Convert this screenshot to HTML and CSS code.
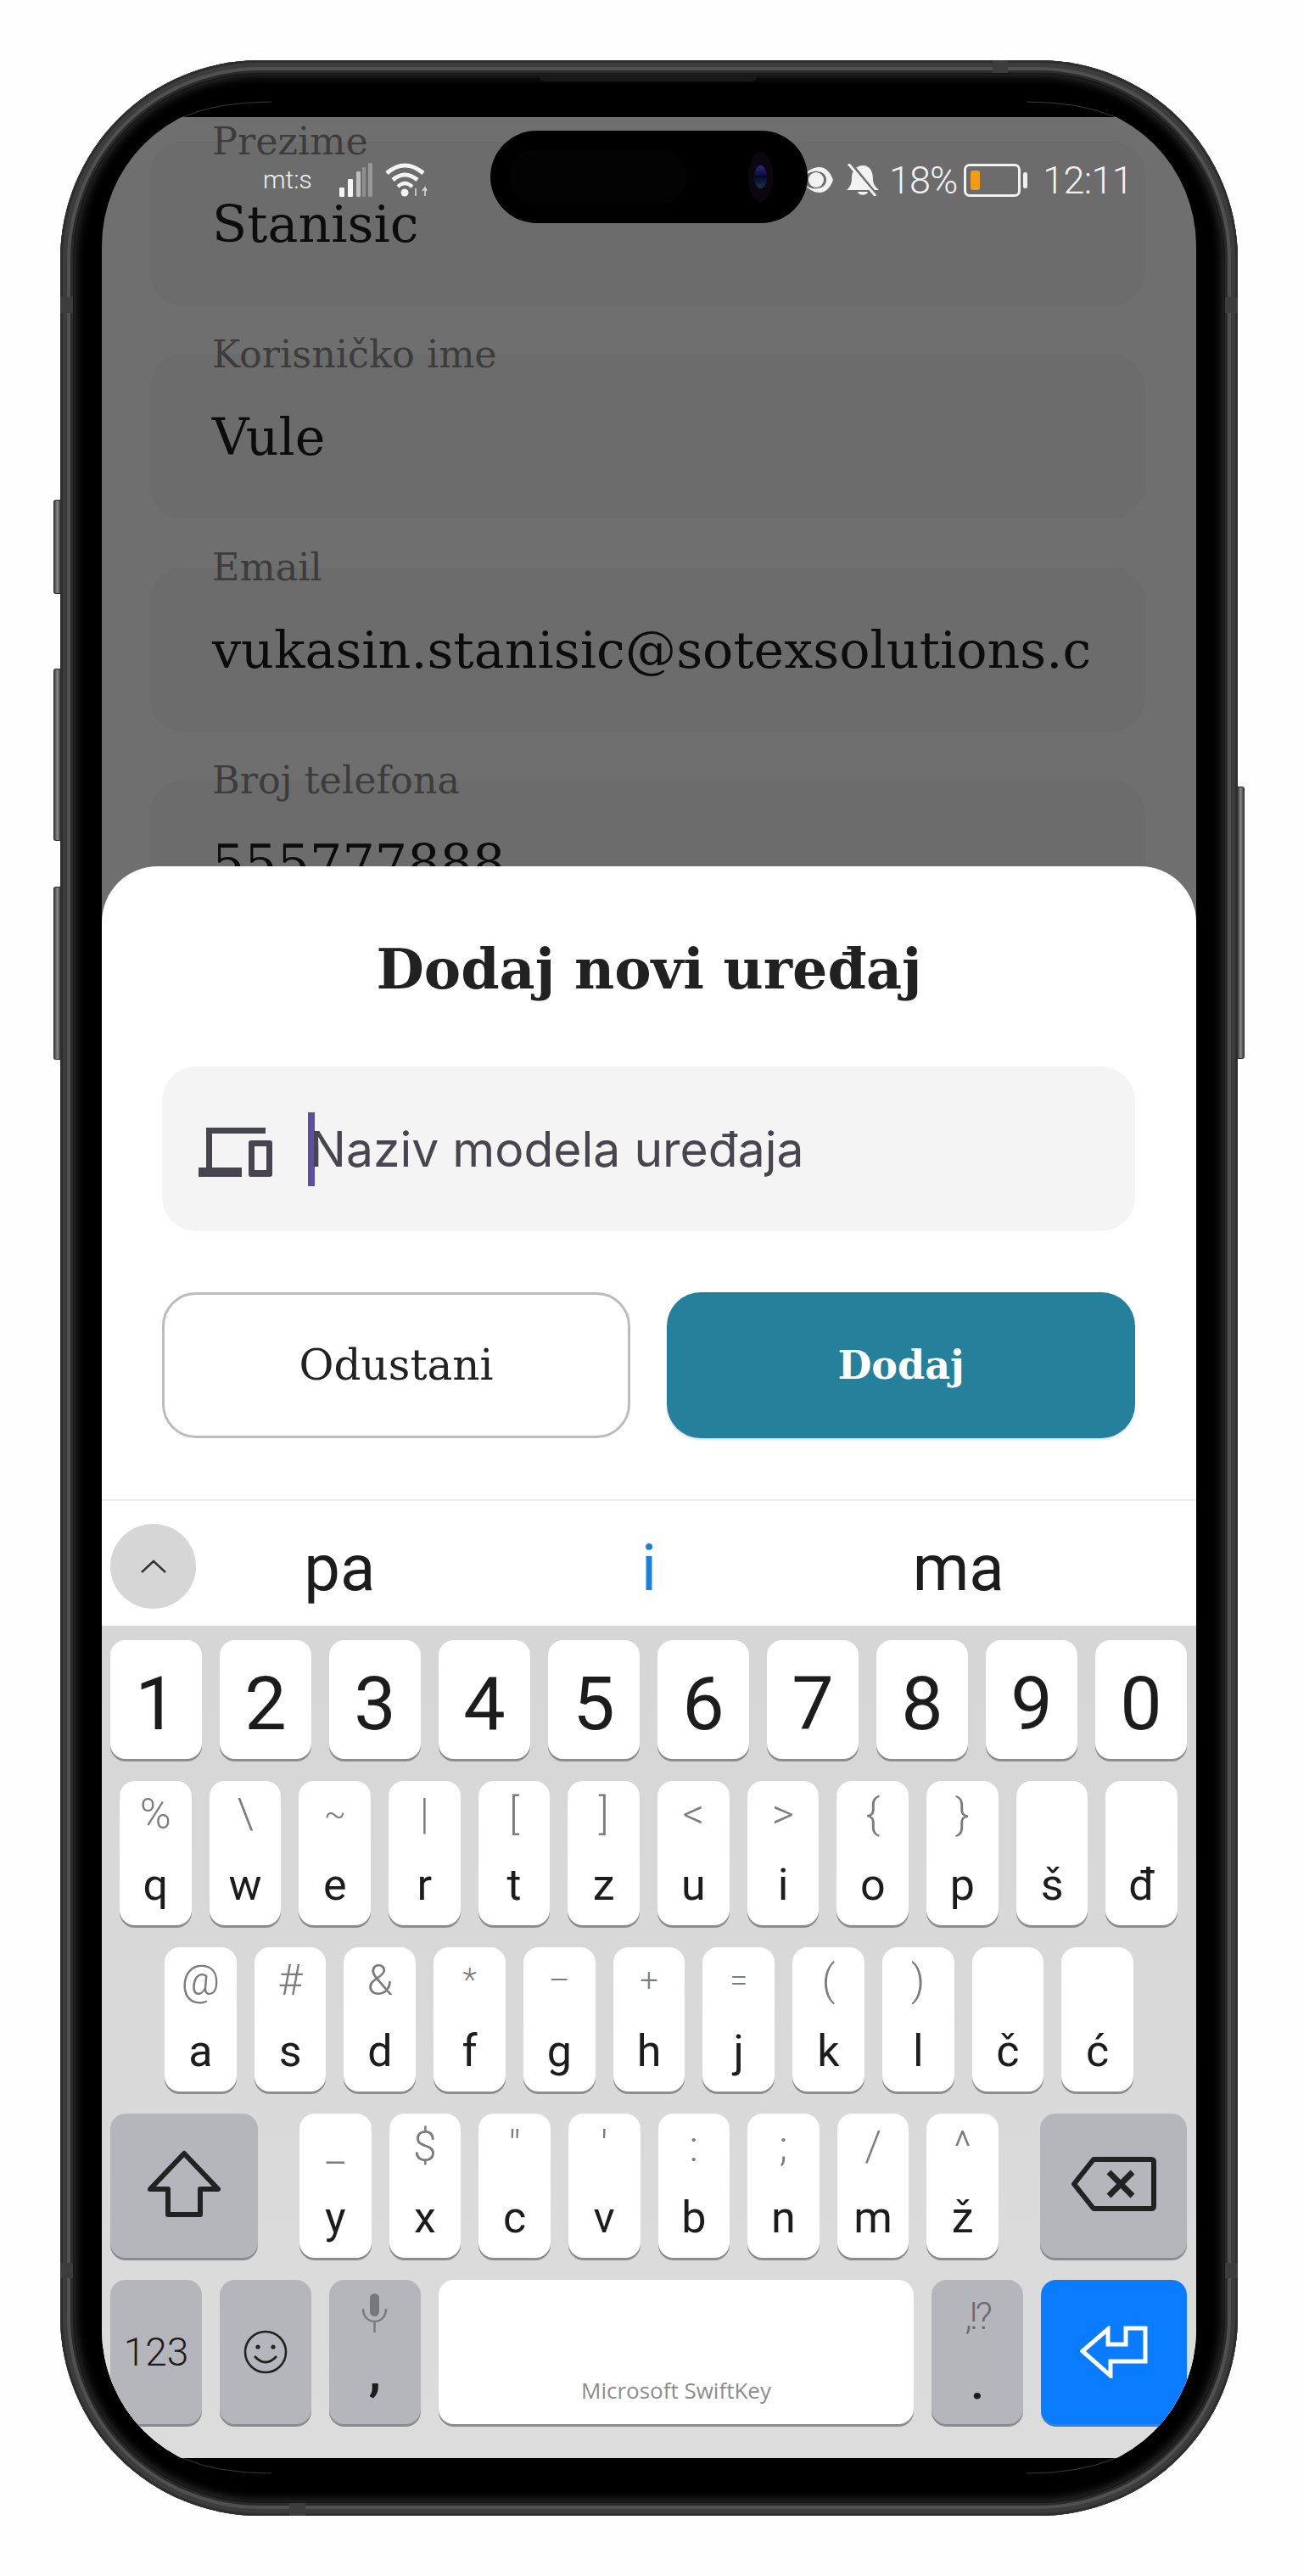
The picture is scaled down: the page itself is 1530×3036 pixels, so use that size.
FILE: index.html
```html
<!DOCTYPE html>
<html lang="sr">
<head>
  <meta charset="UTF-8" />
  <meta name="viewport" content="width=device-width, initial-scale=1.0" />
  <title>Dodaj novi uređaj</title>
  <link rel="stylesheet" href="styles.css">
</head>
<body>

  <div class="phone">
    <span class="side-btn btn-mute"></span>
    <span class="side-btn btn-up"></span>
    <span class="side-btn btn-down"></span>
    <span class="side-btn btn-power"></span>
    <span class="band band-top"></span>
    <span class="band band-bottom"></span>
    <span class="band band-left"></span>
    <span class="band band-right"></span>
    <span class="band band-left-low"></span>
    <span class="band band-right-low"></span>

    <div class="bezel">
      <span class="speaker"></span>

      <svg class="hairlines" width="1356" height="2862" viewBox="0 0 1356 2862">
        <path d="M128 51 Q170 33 233 33 M1228 51 Q1186 33 1123 33 M128 2810 Q170 2828 233 2828 M1228 2810 Q1186 2828 1123 2828" fill="none" stroke="#3a3a3a" stroke-width="1"/>
      </svg>

      <div class="screen-mask">
        <div class="screen">

          <div class="form">
            <div class="field">
              <span class="field-label">Prezime</span>
              <span class="field-value">Stanisic</span>
            </div>
            <div class="field">
              <span class="field-label">Korisničko ime</span>
              <span class="field-value">Vule</span>
            </div>
            <div class="field">
              <span class="field-label">Email</span>
              <span class="field-value">vukasin.stanisic@sotexsolutions.c</span>
            </div>
            <div class="field">
              <span class="field-label">Broj telefona</span>
              <span class="field-value">555777888</span>
            </div>
          </div>

          <div class="status-bar">
            <div class="status-left">
              <span class="carrier">mt:s</span>
              <svg class="icon-signal" width="40" height="40" viewBox="0 0 40 40">
                <rect x="0" y="29" width="6" height="11" rx="1" fill="#f4f4f4"/>
                <rect x="10" y="19" width="6" height="21" rx="1" fill="#f4f4f4"/>
                <rect x="20" y="10" width="5" height="30" rx="1" fill="#bdbdbd"/>
                <rect x="27" y="5" width="4" height="35" rx="1" fill="#8f8f8f"/>
                <rect x="34" y="0" width="5" height="40" rx="1" fill="#989898"/>
              </svg>
              <svg class="icon-wifi" width="50" height="40" viewBox="0 0 50 40">
                <path d="M2 12 Q23 -6 45 12" fill="none" stroke="#f4f4f4" stroke-width="5"/>
                <path d="M9 20 Q23 8 38 20" fill="none" stroke="#f4f4f4" stroke-width="5"/>
                <path d="M15 28 Q23 20 32 28" fill="none" stroke="#f4f4f4" stroke-width="4.5"/>
                <circle cx="23" cy="35" r="4.5" fill="#f4f4f4"/>
                <path d="M36 39 V30 M47 39 V30 M44 33 L47 29 L49 33" fill="none" stroke="#d8d8d8" stroke-width="1.6"/>
              </svg>
            </div>
            <div class="status-right">
              <svg class="icon-eye" width="36" height="30" viewBox="0 0 36 30">
                <path d="M0 11 C6 2 14 0 19 0 C26 0 32 6 35 15 C32 24 26 30 19 30 C14 30 6 27 0 19 C7 25 12 26 17 25 C24 24 27 20 27 15 C27 10 24 6 17 5 C12 4 7 6 0 11Z" fill="#f2f2f2"/>
                <circle cx="15" cy="15" r="9" fill="#f2f2f2"/>
              </svg>
              <svg class="icon-bell" width="38" height="38" viewBox="0 0 38 38">
                <path d="M19 2 C28 2 31 10 31 18 C31 24 34 27 38 31 H0 C4 27 6 24 6 16 C6 9 11 2 19 2Z" fill="#f2f2f2"/>
                <path d="M13 33 H25 C24 38 14 38 13 33Z" fill="#f2f2f2"/>
                <path d="M5 0 L36 38" stroke="#6f6f6f" stroke-width="4"/>
                <path d="M2 0 L34 38" stroke="#f2f2f2" stroke-width="3"/>
              </svg>
              <span class="battery-pct">18%</span>
              <div class="battery"><span class="battery-fill"></span></div>
              <span class="battery-nub"></span>
              <span class="clock">12:11</span>
            </div>
          </div>

          <div class="sheet">
            <h2 class="sheet-title">Dodaj novi uređaj</h2>

            <div class="input-box">
              <svg class="icon-device" width="87" height="58" viewBox="0 0 87 58">
                <path d="M9 0 H79 V7 H16 V47 H51 V58 H0 V47 H9Z" fill="#49454f"/>
                <path fill-rule="evenodd" d="M62 15 H84 Q87 15 87 18 V55 Q87 58 84 58 H62 Q59 58 59 55 V18 Q59 15 62 15Z M66 22 V50 H80 V22Z" fill="#49454f"/>
              </svg>
              <span class="caret"></span>
              <span class="placeholder">Naziv modela uređaja</span>
            </div>

            <div class="sheet-actions">
              <button class="btn btn-cancel">Odustani</button>
              <button class="btn btn-add">Dodaj</button>
            </div>

            <div class="suggest-bar">
              <div class="suggest-toggle">
                <svg width="32" height="18" viewBox="0 0 32 18">
                  <path d="M2 16 L16 3 L30 16" fill="none" stroke="#333" stroke-width="2.4"/>
                </svg>
              </div>
              <div class="suggest-words">
                <span>pa</span>
                <span class="suggest-main">i</span>
                <span>ma</span>
              </div>
            </div>

            <div class="keyboard">
              <div class="kb-row row-digits">
                <div class="key digit">1</div>
                <div class="key digit">2</div>
                <div class="key digit">3</div>
                <div class="key digit">4</div>
                <div class="key digit">5</div>
                <div class="key digit">6</div>
                <div class="key digit">7</div>
                <div class="key digit">8</div>
                <div class="key digit">9</div>
                <div class="key digit">0</div>
              </div>

              <div class="kb-row row-top">
                <div class="key"><span class="hint">%</span><span class="letter">q</span></div>
                <div class="key"><span class="hint">\</span><span class="letter">w</span></div>
                <div class="key"><span class="hint hint-small">~</span><span class="letter">e</span></div>
                <div class="key"><span class="hint">|</span><span class="letter">r</span></div>
                <div class="key"><span class="hint">[</span><span class="letter">t</span></div>
                <div class="key"><span class="hint">]</span><span class="letter">z</span></div>
                <div class="key"><span class="hint">&lt;</span><span class="letter">u</span></div>
                <div class="key"><span class="hint">&gt;</span><span class="letter">i</span></div>
                <div class="key"><span class="hint">{</span><span class="letter">o</span></div>
                <div class="key"><span class="hint">}</span><span class="letter">p</span></div>
                <div class="key"><span class="hint"></span><span class="letter">š</span></div>
                <div class="key"><span class="hint"></span><span class="letter">đ</span></div>
              </div>

              <div class="kb-row row-home">
                <div class="key"><span class="hint">@</span><span class="letter">a</span></div>
                <div class="key"><span class="hint">#</span><span class="letter">s</span></div>
                <div class="key"><span class="hint">&amp;</span><span class="letter">d</span></div>
                <div class="key"><span class="hint hint-small">*</span><span class="letter">f</span></div>
                <div class="key"><span class="hint hint-small">–</span><span class="letter">g</span></div>
                <div class="key"><span class="hint hint-small">+</span><span class="letter">h</span></div>
                <div class="key"><span class="hint hint-small">=</span><span class="letter">j</span></div>
                <div class="key"><span class="hint">(</span><span class="letter">k</span></div>
                <div class="key"><span class="hint">)</span><span class="letter">l</span></div>
                <div class="key"><span class="hint"></span><span class="letter">č</span></div>
                <div class="key"><span class="hint"></span><span class="letter">ć</span></div>
              </div>

              <div class="kb-row row-shift">
                <div class="key key-mod key-shift">
                  <svg width="88" height="80" viewBox="0 0 88 80">
                    <path d="M44 4 L84 46 H63 V76 H25 V46 H4Z" fill="none" stroke="#222" stroke-width="6" stroke-linejoin="round"/>
                  </svg>
                </div>
                <div class="key"><span class="hint">_</span><span class="letter">y</span></div>
                <div class="key"><span class="hint">$</span><span class="letter">x</span></div>
                <div class="key"><span class="hint">"</span><span class="letter">c</span></div>
                <div class="key"><span class="hint">'</span><span class="letter">v</span></div>
                <div class="key"><span class="hint">:</span><span class="letter">b</span></div>
                <div class="key"><span class="hint">;</span><span class="letter">n</span></div>
                <div class="key"><span class="hint">/</span><span class="letter">m</span></div>
                <div class="key"><span class="hint">^</span><span class="letter">ž</span></div>
                <div class="key key-mod key-back">
                  <svg width="100" height="64" viewBox="0 0 100 64">
                    <path d="M26 3 H94 Q97 3 97 6 V58 Q97 61 94 61 H26 L3 32Z" fill="none" stroke="#222" stroke-width="6" stroke-linejoin="round"/>
                    <path d="M44 18 L72 46 M72 18 L44 46" fill="none" stroke="#222" stroke-width="7"/>
                  </svg>
                </div>
              </div>

              <div class="kb-row row-bottom">
                <div class="key key-mod key-num">123</div>
                <div class="key key-mod key-num">
                  <svg width="52" height="52" viewBox="0 0 52 52">
                    <circle cx="26" cy="26" r="24" fill="none" stroke="#222" stroke-width="2.6"/>
                    <circle cx="17" cy="20" r="2.6" fill="#222"/>
                    <circle cx="35" cy="20" r="2.6" fill="#222"/>
                    <path d="M13 31 Q26 45 39 31" fill="none" stroke="#222" stroke-width="2.8"/>
                  </svg>
                </div>
                <div class="key key-mod key-mic">
                  <svg width="32" height="46" viewBox="0 0 32 46">
                    <rect x="10" y="0" width="11" height="27" rx="5.5" fill="#77787c"/>
                    <path d="M2 18 C2 38 29 38 29 18 M15.5 33 V46" fill="none" stroke="#77787c" stroke-width="2.4"/>
                  </svg>
                  <span class="key-comma">,</span>
                </div>
                <div class="key key-space">
                  <span class="brand">Microsoft SwiftKey</span>
                </div>
                <div class="key key-mod key-punct">
                  <span class="punct-hint">,!?</span>
                  <span class="punct-dot">.</span>
                </div>
                <div class="key key-enter">
                  <svg width="80" height="62" viewBox="0 0 80 62">
                    <path d="M3 30 L33 4 V22 H54 V3 H77 V42 H36 V59Z" fill="none" stroke="#fff" stroke-width="5"/>
                  </svg>
                </div>
              </div>
            </div>
          </div>

        </div>
      </div>

      <div class="pill">
        <span class="pill-inner"></span>
        <span class="lens"><span class="lens-core"></span></span>
      </div>
    </div>
  </div>

</body>
</html>
```

FILE: styles.css
```css
* {
  box-sizing: border-box;
  margin: 0;
  padding: 0;
}

body {
  width: 1530px;
  height: 3036px;
  background: #fefefe;
  padding: 71px 71px 0;
  overflow: hidden;
  font-family: Roboto, sans-serif;
}

/* phone shell */
.phone {
  position: relative;
  width: 1388px;
  height: 2894px;
  padding: 16px;
  border-radius: 235px;
  background: #2a2a2a;
  box-shadow: inset 0 0 0 3px #2e2e2e, inset 0 0 0 8px #3c3c3c, inset 0 0 0 12px #505050;
}

.side-btn {
  position: absolute;
  width: 8px;
  background: linear-gradient(to right, #444, #8a8a8a 55%, #3a3a3a);
  border: 1px solid #2a2a2a;
  border-right: none;
  border-radius: 3px 0 0 3px;
}

.btn-mute { left: -8px; top: 518px; height: 111px; }
.btn-up { left: -8px; top: 717px; height: 203px; }
.btn-down { left: -8px; top: 974px; height: 204px; }
.btn-power {
  left: auto;
  right: -8px;
  top: 856px;
  height: 321px;
  border: 1px solid #2a2a2a;
  border-left: none;
  border-radius: 0 3px 3px 0;
  background: linear-gradient(to left, #444, #8a8a8a 55%, #3a3a3a);
}

.band { position: absolute; background: #3c3c3c; }
.band-top { left: 1099px; top: 0; width: 18px; height: 15px; }
.band-bottom { left: 270px; bottom: 0; width: 19px; height: 15px; }
.band-left { left: 0; top: 279px; width: 15px; height: 19px; }
.band-right { right: 0; top: 279px; width: 15px; height: 19px; }
.band-left-low { left: 0; top: 2596px; width: 15px; height: 18px; }
.band-right-low { right: 0; top: 2596px; width: 15px; height: 18px; }

.bezel {
  position: relative;
  height: 100%;
  padding: 33px;
  border-radius: 219px;
  background: #000;
  box-shadow: 0 0 0 1px #161616, inset 0 0 12px 2px #333;
}

.speaker {
  position: absolute;
  left: 549px;
  top: 1px;
  width: 256px;
  height: 8px;
  border-radius: 0 0 6px 6px;
  background: #191919;
}

.hairlines {
  position: absolute;
  left: 0;
  top: 0;
}

.screen-mask {
  position: relative;
  height: 2795px;
  padding: 18px 0;
  border-radius: 170px;
  overflow: hidden;
}

.screen {
  position: relative;
  height: 2759px;
  overflow: hidden;
  background: #6f6f6f;
}

.pill {
  position: absolute;
  left: 491px;
  top: 67px;
  width: 374px;
  height: 109px;
  border-radius: 55px;
  background: #000;
}

.pill-inner {
  position: absolute;
  left: 22px;
  top: 22px;
  width: 210px;
  height: 65px;
  border-radius: 33px;
  background: #030303;
}

.lens {
  position: absolute;
  left: 304px;
  top: 25px;
  width: 29px;
  height: 59px;
  border-radius: 50%;
  background: #0b0610;
}

.lens-core {
  position: absolute;
  left: 7px;
  top: 16px;
  width: 15px;
  height: 27px;
  border-radius: 50%;
  background: linear-gradient(#2a2a80, #08082e 50%, #123a44);
}

/* form behind the dim */
.form {
  display: flex;
  flex-direction: column;
  gap: 58px;
  padding: 29px 60px 0 56px;
}

.field {
  display: flex;
  flex-direction: column;
  flex-shrink: 0;
  height: 193px;
  padding-left: 74px;
  border-radius: 40px;
  background: #6c6c6c;
  font-family: "DejaVu Serif", serif;
}

.field-label {
  margin-top: -23px;
  font-size: 44.5px;
  line-height: 46px;
  color: #3c3c3c;
}

.field-value {
  margin-top: 44px;
  font-size: 60.3px;
  line-height: 60px;
  color: #0c0c0c;
  white-space: nowrap;
}

/* status bar */
.status-bar {
  position: absolute;
  left: 0;
  right: 0;
  top: 54px;
  height: 40px;
  display: flex;
  justify-content: space-between;
  align-items: center;
  padding: 0 75px 0 190px;
  color: #f2f2f2;
}

.status-left {
  display: flex;
  align-items: center;
}

.carrier {
  width: 90px;
  font-size: 30px;
  font-weight: 300;
  line-height: 24px;
}

.icon-wifi { margin-left: 14px; }

.status-right {
  display: flex;
  align-items: center;
}

.icon-bell { margin-left: 15px; }

.battery-pct {
  margin-left: 12px;
  font-size: 45px;
  font-weight: 300;
  letter-spacing: -1px;
}

.battery {
  width: 67px;
  height: 39px;
  margin-left: 8px;
  padding: 5px;
  border: 3px solid #f2f2f2;
  border-radius: 7px;
}

.battery-fill {
  display: block;
  width: 11px;
  height: 100%;
  border-radius: 3px;
  background: #f59a14;
}

.battery-nub {
  width: 5px;
  height: 19px;
  margin-left: 3px;
  border-radius: 2px;
  background: #f2f2f2;
}

.clock {
  margin-left: 18px;
  font-size: 45px;
  font-weight: 300;
  letter-spacing: -0.7px;
}

/* bottom sheet */
.sheet {
  position: absolute;
  left: 0;
  right: 0;
  bottom: 0;
  height: 1876px;
  border-radius: 66px 66px 0 0;
  background: #fff;
}

.sheet-title {
  height: 236px;
  padding-top: 76px;
  text-align: center;
  font-family: "DejaVu Serif", serif;
  font-size: 65px;
  font-weight: 700;
  line-height: 90px;
  color: #212121;
}

.input-box {
  display: flex;
  align-items: center;
  height: 194px;
  margin: 0 72px 0 71px;
  padding-left: 43px;
  border-radius: 40px;
  background: #f4f4f5;
}

.icon-device { margin-top: 8px; }

.caret {
  width: 8px;
  height: 87px;
  margin-left: 42px;
  background: #5e4fa2;
}

.placeholder {
  margin-left: -6px;
  font-family: Inter, sans-serif;
  font-size: 57px;
  color: #49454f;
  white-space: nowrap;
}

.sheet-actions {
  display: flex;
  gap: 43px;
  margin: 72px 71px 0;
}

.btn {
  flex: 0 0 552px;
  height: 172px;
  border-radius: 40px;
  font-family: "DejaVu Serif", serif;
}

.btn-cancel {
  border: 3px solid #bcbcbc;
  background: #fff;
  color: #222;
  font-size: 50px;
}

.btn-add {
  border: none;
  background: #25809b;
  color: #fff;
  font-size: 46px;
  font-weight: 700;
  box-shadow: 0 2px 3px rgba(0,0,0,0.15);
}

/* suggestions */
.suggest-bar {
  display: flex;
  align-items: center;
  height: 149px;
  margin-top: 72px;
  padding-top: 6px;
  border-top: 2px solid #eee;
}

.suggest-toggle {
  display: flex;
  justify-content: center;
  align-items: center;
  flex-shrink: 0;
  width: 101px;
  height: 100px;
  margin-left: 10px;
  border-radius: 50%;
  background: #d6d6d6;
}

.suggest-words {
  flex: 1;
  display: grid;
  grid-template-columns: repeat(3, 1fr);
  margin-left: -13px;
  padding: 4px 98px 0 0;
  text-align: center;
  font-size: 76px;
  color: #1c1c1c;
}

.suggest-main { color: #1a7fe0; }

/* keyboard */
.keyboard {
  display: flex;
  flex-direction: column;
  gap: 26px;
  height: 981px;
  padding-top: 17px;
  background: linear-gradient(#d6d6d6, #dcdcdc);
}

.kb-row {
  display: flex;
  gap: 21px;
  height: 170px;
  padding: 0 11px 0 10px;
}

.row-digits { height: 140px; }
.row-top { padding: 0 22px 0 21px; }
.row-home { padding: 0 74px; }

.key {
  flex: 1;
  display: flex;
  flex-direction: column;
  align-items: center;
  padding-top: 9px;
  border-radius: 18px;
  background: #fff;
  box-shadow: 0 3px 0 #8c8c8c;
  color: #1c1c1c;
}

.digit {
  justify-content: center;
  padding-top: 8px;
  font-size: 88px;
}

.hint {
  height: 60px;
  font-size: 50px;
  font-weight: 300;
  line-height: 60px;
  color: #7c7c7c;
}

.hint-small { font-size: 38px; }

.letter {
  margin-top: 24px;
  font-size: 52px;
  line-height: 60px;
}

.key-mod {
  background: #b4b6bb;
  box-shadow: 0 3px 0 #8a8c90;
  justify-content: center;
  padding-top: 0;
}

.key-shift { flex: 0 0 174px; margin-right: 28px; }
.key-back { flex: 0 0 173px; margin-left: 28px; padding-bottom: 4px; }
.key-shift svg { margin-bottom: 4px; }

.key-num {
  flex: 0 0 108px;
  font-size: 46px;
  font-weight: 300;
}

.key-mic {
  flex: 0 0 108px;
  justify-content: flex-start;
  padding-top: 16px;
}

.key-comma {
  margin-top: 12px;
  font-size: 60px;
  font-weight: 700;
  line-height: 70px;
}

.key-space {
  justify-content: flex-end;
  padding: 0 0 22px;
}

.brand {
  font-family: "Open Sans", sans-serif;
  font-size: 26px;
  color: #8d8d8d;
}

.key-punct {
  flex: 0 0 108px;
  justify-content: flex-start;
  padding-top: 18px;
}

.punct-hint {
  font-size: 44px;
  font-weight: 300;
  line-height: 50px;
  color: #6a6a6e;
  letter-spacing: -3px;
}

.punct-dot {
  margin-top: 30px;
  font-size: 52px;
  font-weight: 700;
  line-height: 50px;
}

.key-enter {
  flex: 0 0 172px;
  justify-content: center;
  padding-top: 0;
  background: #0a7cff;
  box-shadow: 0 3px 0 #3d7fc9;
}
```
